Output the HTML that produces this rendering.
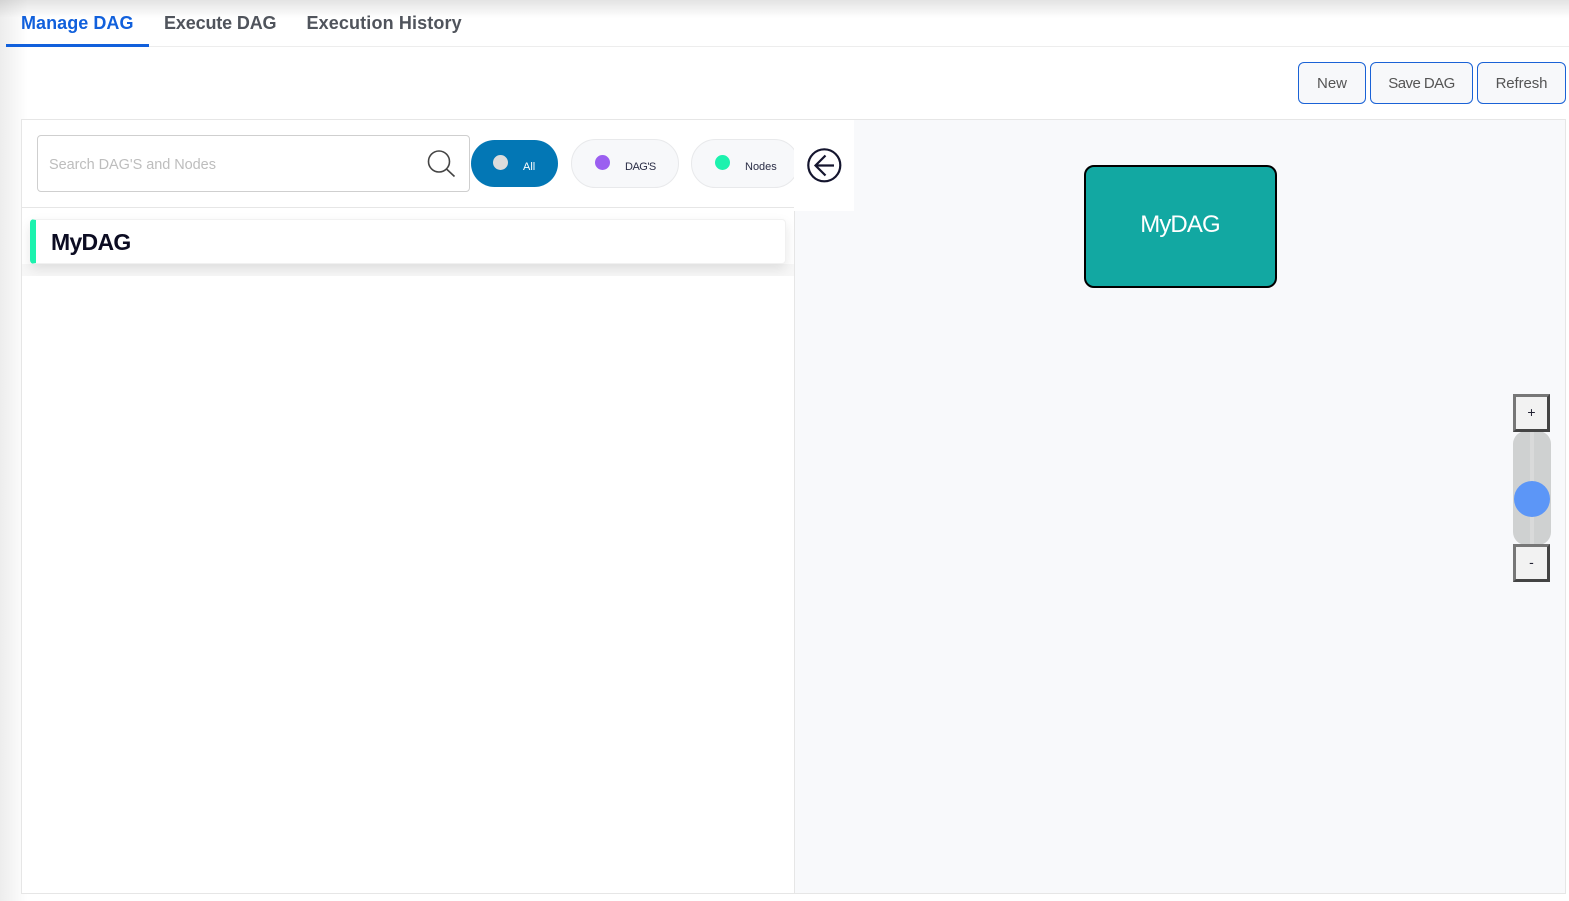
<!DOCTYPE html>
<html>
<head>
<meta charset="utf-8">
<style>
html,body{margin:0;padding:0;width:1569px;height:901px;overflow:hidden;background:#fff;font-family:"Liberation Sans",sans-serif}
.a{position:absolute;box-sizing:border-box;white-space:nowrap}
.btn{top:62px;height:42px;border:1px solid #1a62d6;border-radius:6px;background:#f7f8fa;color:#555;font-size:15px;line-height:42px;text-align:center}
.pill{top:139px;height:49px;border:1px solid #e8e9eb;border-radius:25px;background:#f7f8fa}
.dot{width:15px;height:15px;border-radius:50%}
.lbl{font-size:11px;color:#2a2d45;line-height:14px}
.tab{top:12px;font-size:18px;font-weight:700;line-height:22px;color:#50545c}
.zb{left:1513px;width:37px;height:38px;background:#f2f2f2;border:3px solid;border-color:#777 #444 #444 #777;font-size:14px;line-height:31px;text-align:center;color:#223}
</style>
</head>
<body>
<div class="a" style="left:0;top:0;width:1569px;height:18px;background:linear-gradient(rgba(0,0,0,.11),rgba(0,0,0,0))"></div>
<div class="a" style="left:0;top:0;width:28px;height:901px;background:linear-gradient(90deg,rgba(0,0,0,.07),rgba(0,0,0,0))"></div>
<div class="a" style="left:0;top:46px;width:1569px;height:1px;background:#ededed"></div>
<div class="a" style="left:6px;top:44px;width:143px;height:3px;background:#1160dc"></div>
<div class="a tab" style="left:21px;color:#1160dc;letter-spacing:.05px">Manage DAG</div>
<div class="a tab" style="left:164px;letter-spacing:-.15px">Execute DAG</div>
<div class="a tab" style="left:306.500px;letter-spacing:.13px">Execution History</div>

<div class="a btn" style="left:1298px;width:68px">New</div>
<div class="a btn" style="left:1370px;width:103px;letter-spacing:-.55px">Save DAG</div>
<div class="a btn" style="left:1477px;width:89px;letter-spacing:-.1px">Refresh</div>

<div class="a" style="left:21px;top:119px;width:1545px;height:775px;border:1px solid #e6e6e6;background:#fff"></div>
<div class="a" style="left:794px;top:120px;width:771px;height:773px;background:#f8f9fb;border-left:1px solid #e6e6e6"></div>
<div class="a" style="left:794px;top:120px;width:60px;height:91px;background:#fff"></div>

<div class="a" style="left:37px;top:135px;width:433px;height:57px;border:1px solid #cfcfcf;border-radius:4px;background:#fff"></div>
<div class="a" style="left:49px;top:156px;font-size:14.500px;line-height:18px;color:#bdbdbd;letter-spacing:-.05px">Search DAG'S and Nodes</div>
<svg class="a" style="left:425px;top:148px" width="32" height="32" viewBox="0 0 32 32" fill="none" stroke="#444" stroke-width="1.600"><circle cx="14" cy="13.500" r="10.500"/><path d="M21.500 21l8 7.500"/></svg>

<div class="a pill" style="left:471px;top:140px;width:87px;height:47px;background:#0377b5;border:0"></div>
<div class="a dot" style="left:493px;top:155px;background:#dcdcdc"></div>
<div class="a lbl" style="left:523px;top:160px;color:#fff">All</div>

<div class="a pill" style="left:571px;width:108px"></div>
<div class="a dot" style="left:595px;top:155px;background:#9b5ff0"></div>
<div class="a lbl" style="left:625px;top:160px;letter-spacing:-.5px">DAG'S</div>

<div class="a" style="left:691px;top:139px;width:103px;height:49px;overflow:hidden"><div class="a pill" style="left:0;top:0;width:108px"></div></div>
<div class="a dot" style="left:715px;top:155px;background:#1cf2ae"></div>
<div class="a lbl" style="left:745px;top:160px">Nodes</div>

<svg class="a" style="left:806px;top:147px" width="38" height="38" viewBox="0 0 38 38" fill="none" stroke="#14152e" stroke-width="2.200"><circle cx="18.300" cy="18.300" r="16"/><path d="M19.500 8.500l-10 10 10 10M9.500 18.500h18.500"/></svg>

<div class="a" style="left:22px;top:207px;width:772px;height:1px;background:#e6e6e6"></div>
<div class="a" style="left:22px;top:208px;width:772px;height:68px;overflow:hidden">
<div class="a" style="left:0;top:56px;width:772px;height:12px;background:#f7f7f7"></div>
<div class="a" style="left:8px;top:11px;width:756px;height:45px;background:#fff;border:1px solid #f1f1f1;border-left:6px solid #1cf2ae;border-radius:4px;box-shadow:0 5px 12px rgba(0,0,0,.1)"></div>
</div>
<div class="a" style="left:51px;top:228px;font-size:23px;font-weight:700;line-height:28px;color:#0c0c22;letter-spacing:-.7px">MyDAG</div>

<div class="a" style="left:1084px;top:165px;width:193px;height:123px;background:#12a8a2;border:2px solid #000;border-radius:10px"></div>
<div class="a" style="left:1084px;top:210px;width:192px;text-align:center;font-size:24px;line-height:30px;color:#fff;letter-spacing:-.9px">MyDAG</div>

<div class="a" style="left:1513px;top:431px;width:38px;height:114px;background:#cfd1d1;border-radius:13px"></div>
<div class="a" style="left:1530px;top:431px;width:4px;height:114px;background:#d9dada"></div>
<div class="a" style="left:1514px;top:481px;width:36px;height:36px;border-radius:50%;background:#5c96f7"></div>
<div class="a zb" style="top:394px">+</div>
<div class="a zb" style="top:544px">-</div>
</body>
</html>
